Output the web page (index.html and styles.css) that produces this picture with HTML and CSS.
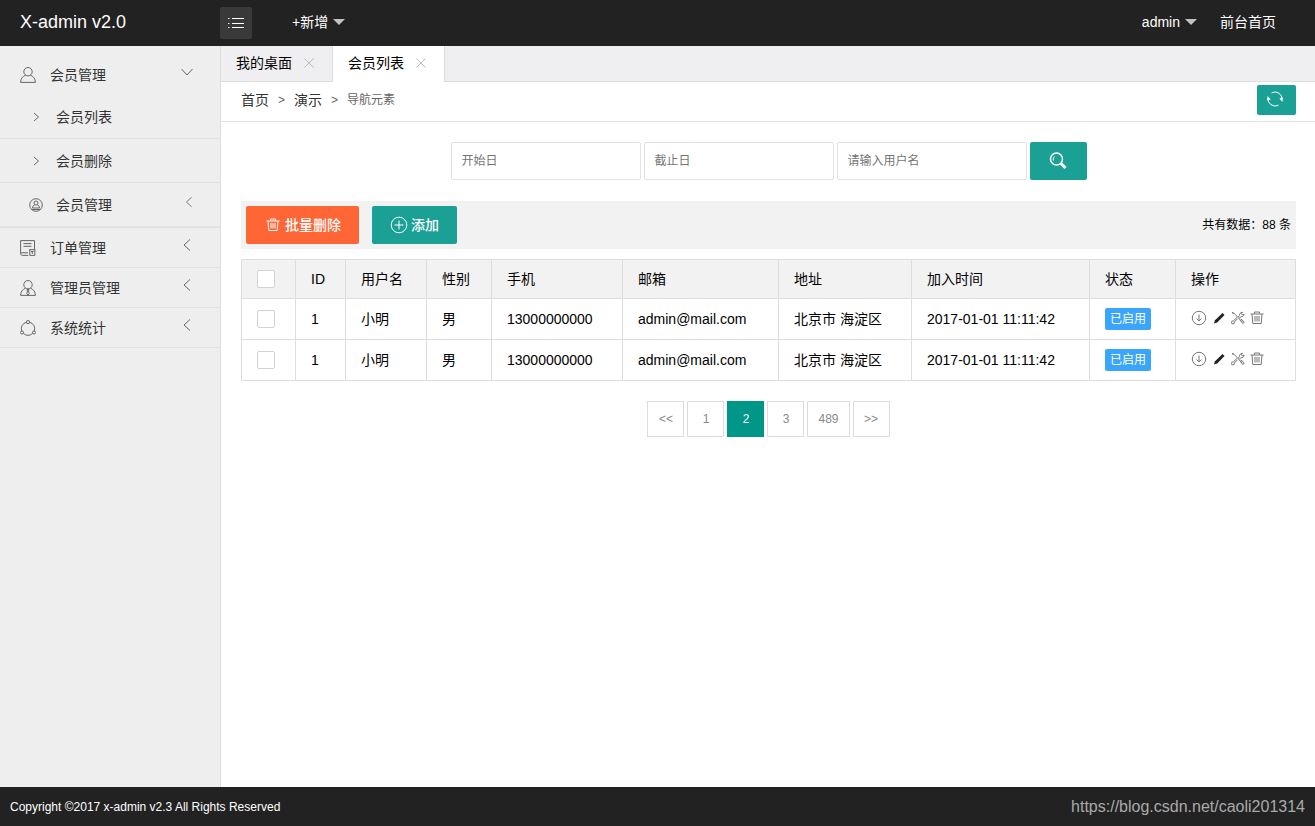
FILE: index.html
```html
<!DOCTYPE html>
<html lang="zh-CN">
<head>
<meta charset="utf-8">
<meta name="viewport" content="width=device-width, initial-scale=1">
<title>X-admin v2.0</title>
<link rel="stylesheet" href="styles.css">
</head>
<body>
<svg class="sprite" aria-hidden="true">
  <symbol id="user" viewBox="0 0 16 16"><circle cx="8" cy="4.700" r="4.200"/><path d="M5.500 8.200C2.500 9.500.8 11.500.6 15.400h14.800c-.2-3.900-1.900-5.900-4.900-7.200"/></symbol>
  <symbol id="admin" viewBox="0 0 16 16"><circle cx="8" cy="4.700" r="4.200"/><path d="M5.500 8.200C2.500 9.500.8 11.500.6 15.400h14.800c-.2-3.900-1.900-5.900-4.900-7.200M7 9.500h2l-.5 1.500.7 2.500L8 15.200l-1.200-1.700.7-2.500z"/></symbol>
  <symbol id="order" viewBox="0 0 16 16"><path d="M14.500 9V.6H.6v12.500c0 1.500.5 2.300 1.900 2.300h5.700M3.500 3.600h8M3.500 6.300h8M1 12.800h7M9 9.700h6.500M9.800 9.700v5.700h5v-5.700M11 11.500h2.600M12.300 11.500v2.300"/></symbol>
  <symbol id="stats" viewBox="0 0 16 16"><circle cx="8" cy="2.100" r="1.600"/><circle cx="2" cy="12.500" r="1.500"/><circle cx="14" cy="12.500" r="1.500"/><path d="M6.400 2.300A6.400 6.400 0 0 0 1.800 11M9.600 2.300A6.400 6.400 0 0 1 14.200 11M3.300 13.300a6.400 6.400 0 0 0 9.400 0"/></symbol>
  <symbol id="member" viewBox="0 0 14 14"><circle cx="7" cy="7" r="6.300"/><circle cx="7" cy="5" r="2"/><path d="M5.800 6.700C4.300 7.400 3.600 8.300 3.500 10h7c-.1-1.700-.8-2.600-2.300-3.300M2.500 11.500h9"/></symbol>
  <symbol id="right" viewBox="0 0 14 14"><path d="M5 3l4.500 4L5 11"/></symbol>
  <symbol id="left" viewBox="0 0 14 14"><path d="M10 1.500L4 7l6 5.500"/></symbol>
  <symbol id="down" viewBox="0 0 14 14"><path d="M1.500 4L7 10l5.500-6"/></symbol>
  <symbol id="close" viewBox="0 0 14 14"><path d="M2.500 2.500l9 9M11.500 2.500l-9 9"/></symbol>
  <symbol id="list" viewBox="0 0 18 18"><path d="M1 4.500h1.500M5 4.500h12M1 9.500h1.500M5 9.500h12M1 13.500h1.500M5 13.500h12"/></symbol>
  <symbol id="refresh" viewBox="0 0 16 16"><path d="M4.500 1.900A7 7 0 0 1 14.900 9M11.500 14.100A7 7 0 0 1 1.100 7"/><path class="solid" d="M0 9.500L.6 5l3 3.500zM16 6.500l-.6 4.500-3-3.500z"/></symbol>
  <symbol id="search" viewBox="0 0 18 18"><circle class="ring" cx="7.500" cy="7" r="6"/><path d="M4.500 8.500a3.500 3.500 0 0 1 1-4"/><path class="handle" d="M12 11.500l4.500 4.500"/></symbol>
  <symbol id="trash" viewBox="0 0 14 14"><path d="M.5 3h13M4.500 2.800V1h5v1.800M2 3l.8 9.500h8.400L12 3M5 5v5.500M7 5v5.500M9 5v5.500"/></symbol>
  <symbol id="plus" viewBox="0 0 18 18"><circle cx="9" cy="9" r="7.800"/><path d="M4.500 9h9M9 4.500v9"/></symbol>
  <symbol id="download" viewBox="0 0 16 16"><circle cx="8" cy="8" r="6.700"/><path d="M8 4.500v6.500M5.500 8.500L8 11l2.500-2.500"/></symbol>
  <symbol id="pencil" viewBox="0 0 14 14"><path class="solid" d="M2 12.500l1-3.300L10.500 2l2 2-7.300 7.500z"/></symbol>
  <symbol id="tools" viewBox="0 0 14 14"><path d="M1 1.500l2 .7 8.500 9M1.500 1l.7 2M8.500 8.500l3.300 4 1.500-1.500-3.500-3.200M6.500 7.800L3.300 11a1.500 1.500 0 1 1-1-1L6 6.500M7 6.200l1.500-1.500C8.200 3 9.500 1.200 11.500 1.300L10.300 2.700l1 1.200L13 3c.1 2-1.500 3-3.300 2.800L8.200 7.300"/></symbol>
</svg>

<header class="topbar">
  <a class="logo" href="#">X-admin v2.0</a>
  <button class="toggle" type="button" aria-label="切换菜单"><svg class="icon icon-lg"><use href="#list"/></svg></button>
  <button class="top-link" type="button">+新增<span class="caret"></span></button>
  <nav class="top-right">
    <button class="top-link" type="button">admin<span class="caret"></span></button>
    <a class="top-link" href="#">前台首页</a>
  </nav>
</header>

<div class="shell">
  <nav class="sidebar">
    <button class="item open" type="button"><svg class="icon icon-md"><use href="#user"/></svg><span class="label">会员管理</span><svg class="icon arrow"><use href="#down"/></svg></button>
    <div class="submenu">
      <a class="subitem" href="#"><svg class="icon"><use href="#right"/></svg><span class="label">会员列表</span></a>
      <a class="subitem" href="#"><svg class="icon"><use href="#right"/></svg><span class="label">会员删除</span></a>
      <button class="subitem" type="button"><svg class="icon"><use href="#member"/></svg><span class="label">会员管理</span><svg class="icon icon-sm arrow"><use href="#left"/></svg></button>
    </div>
    <button class="item" type="button"><svg class="icon icon-md"><use href="#order"/></svg><span class="label">订单管理</span><svg class="icon arrow"><use href="#left"/></svg></button>
    <button class="item" type="button"><svg class="icon icon-md"><use href="#admin"/></svg><span class="label">管理员管理</span><svg class="icon arrow"><use href="#left"/></svg></button>
    <button class="item" type="button"><svg class="icon icon-md"><use href="#stats"/></svg><span class="label">系统统计</span><svg class="icon arrow"><use href="#left"/></svg></button>
  </nav>

  <main class="main">
    <div class="tabs">
      <div class="tab"><a href="#">我的桌面</a><button class="tab-close" type="button" aria-label="关闭我的桌面"><svg class="icon"><use href="#close"/></svg></button></div>
      <div class="tab active"><a href="#">会员列表</a><button class="tab-close" type="button" aria-label="关闭会员列表"><svg class="icon"><use href="#close"/></svg></button></div>
    </div>

    <div class="crumbs">
      <a href="#">首页</a><span class="sep">&gt;</span><a href="#">演示</a><span class="sep">&gt;</span><span class="current">导航元素</span>
      <button class="btn refresh" type="button" aria-label="刷新"><svg class="icon icon-md"><use href="#refresh"/></svg></button>
    </div>

    <div class="content">
      <form class="search">
        <input class="field" type="text" placeholder="开始日" aria-label="开始日">
        <input class="field" type="text" placeholder="截止日" aria-label="截止日">
        <input class="field" type="text" placeholder="请输入用户名" aria-label="请输入用户名">
        <button class="btn submit" type="button" aria-label="搜索"><svg class="icon icon-lg"><use href="#search"/></svg></button>
      </form>

      <div class="toolbar">
        <button class="btn danger" type="button"><svg class="icon"><use href="#trash"/></svg>批量删除</button>
        <button class="btn add" type="button"><svg class="icon icon-lg"><use href="#plus"/></svg>添加</button>
        <span class="total">共有数据：88 条</span>
      </div>

      <table class="grid">
        <colgroup><col class="c-check"><col class="c-id"><col class="c-name"><col class="c-sex"><col class="c-phone"><col class="c-mail"><col class="c-addr"><col class="c-time"><col class="c-state"><col class="c-ops"></colgroup>
        <thead>
          <tr><th><input class="check" type="checkbox" aria-label="全选"></th><th>ID</th><th>用户名</th><th>性别</th><th>手机</th><th>邮箱</th><th>地址</th><th>加入时间</th><th>状态</th><th>操作</th></tr>
        </thead>
        <tbody>
          <tr>
            <td><input class="check" type="checkbox" aria-label="选择第一行"></td><td>1</td><td>小明</td><td>男</td><td>13000000000</td><td>admin@mail.com</td><td>北京市 海淀区</td><td>2017-01-01 11:11:42</td><td><span class="badge">已启用</span></td>
            <td><div class="ops"><button type="button" aria-label="下载"><svg class="icon icon-md"><use href="#download"/></svg></button><button class="dark" type="button" aria-label="编辑"><svg class="icon"><use href="#pencil"/></svg></button><button type="button" aria-label="设置"><svg class="icon"><use href="#tools"/></svg></button><button type="button" aria-label="删除"><svg class="icon"><use href="#trash"/></svg></button></div></td>
          </tr>
          <tr>
            <td><input class="check" type="checkbox" aria-label="选择第二行"></td><td>1</td><td>小明</td><td>男</td><td>13000000000</td><td>admin@mail.com</td><td>北京市 海淀区</td><td>2017-01-01 11:11:42</td><td><span class="badge">已启用</span></td>
            <td><div class="ops"><button type="button" aria-label="下载"><svg class="icon icon-md"><use href="#download"/></svg></button><button class="dark" type="button" aria-label="编辑"><svg class="icon"><use href="#pencil"/></svg></button><button type="button" aria-label="设置"><svg class="icon"><use href="#tools"/></svg></button><button type="button" aria-label="删除"><svg class="icon"><use href="#trash"/></svg></button></div></td>
          </tr>
        </tbody>
      </table>

      <nav class="pages" aria-label="分页">
        <a href="#">&lt;&lt;</a><a href="#">1</a><a class="active" href="#">2</a><a href="#">3</a><a href="#">489</a><a href="#">&gt;&gt;</a>
      </nav>
    </div>
  </main>
</div>

<footer class="footer">
  <span>Copyright ©2017 x-admin v2.3 All Rights Reserved</span>
  <span class="source">https://blog.csdn.net/caoli201314</span>
</footer>
</body>
</html>
```
FILE: styles.css
```css
* { box-sizing: border-box; }

body {
  margin: 0;
  min-height: 100vh;
  display: flex;
  flex-direction: column;
  background: #fff;
  color: #000;
  font: 14px/20px "Liberation Sans", "Noto Sans CJK SC", sans-serif;
}

a { color: inherit; text-decoration: none; }
button, input { font: inherit; color: inherit; }
button { padding: 0; border: 0; background: none; cursor: pointer; }

.sprite { position: absolute; width: 0; height: 0; }
.icon { width: 14px; height: 14px; flex: none; fill: none; stroke: currentColor; display: block; }
.icon-sm { width: 12px; height: 12px; }
.icon-md { width: 16px; height: 16px; }
.icon-lg { width: 18px; height: 18px; }
.solid { fill: currentColor; stroke: none; }
.ring { stroke-width: 1.5; }
.handle { stroke-width: 3; }

/* Top bar */
.topbar {
  height: 46px;
  display: flex;
  align-items: center;
  background: #222;
  color: #fff;
  padding-right: 39px;
}
.logo { width: 220px; padding: 0 0 2px 20px; font-size: 18px; }
.toggle {
  width: 32px;
  height: 32px;
  margin-right: 40px;
  display: grid;
  place-items: center;
  background: #393939;
  border-radius: 2px;
}
.top-link { display: flex; align-items: center; gap: 5px; padding-bottom: 2px; }
.caret { border: 6px solid transparent; border-top-color: #c2c2c2; border-bottom: 0; }
.top-right { margin-left: auto; display: flex; gap: 23px; }

/* Side menu */
.shell { flex: 1; display: flex; }
.sidebar {
  width: 221px;
  flex: none;
  padding-top: 9px;
  background: #eee;
  border-right: 1px solid #ddd;
  color: #333;
}
.item, .subitem {
  width: 100%;
  display: flex;
  align-items: center;
  text-align: left;
  border-bottom: 1px solid #e2e2e2;
}
.item { height: 40px; padding: 0 26px 0 20px; gap: 14px; }
.item.open { border-bottom: 0; }
.submenu { border-bottom: 1px solid #e2e2e2; }
.subitem { height: 44px; padding: 0 25px 0 29px; gap: 13px; }
.label { flex: 1; }
.sidebar .icon { color: #666; }
.sidebar .arrow { margin-bottom: 6px; }

/* Tabs */
.main { flex: 1; min-width: 0; }
.tabs { height: 36px; display: flex; background: #efeef0; border-bottom: 1px solid #ddd; }
.tab {
  height: 36px;
  display: flex;
  align-items: center;
  gap: 10px;
  padding: 0 16px 2px 15px;
  border-right: 1px solid #ddd;
}
.tab.active { background: #fff; }
.tab-close { color: #bbb; }

/* Breadcrumb */
.crumbs {
  height: 40px;
  display: flex;
  align-items: center;
  gap: 9px;
  padding: 0 19px 3px 20px;
  border-bottom: 1px solid #e5e5e5;
  color: #333;
}
.sep, .current { font-size: 12px; color: #666; }

.btn {
  height: 38px;
  display: flex;
  align-items: center;
  justify-content: center;
  background: #1aa094;
  border-radius: 2px;
  color: #fff;
}
.refresh { width: 39px; height: 30px; margin-left: auto; padding: 0 4px 2px 0; }

/* Search */
.content { padding: 20px 19px 20px 20px; }
.search { display: flex; justify-content: center; gap: 3px; }
.field {
  width: 190px;
  height: 38px;
  padding: 0 10px;
  border: 1px solid #e2e2e2;
  border-radius: 2px;
  background: #fff;
  font-size: 12px;
}
.field::placeholder { color: #757575; opacity: 1; }
.submit { width: 57px; }

.toolbar {
  margin-top: 21px;
  padding: 5px;
  display: flex;
  align-items: center;
  gap: 13px;
  background: #f2f2f2;
}
.toolbar .btn { padding: 0 18px; gap: 3px; font-weight: 500; }
.toolbar .danger { padding: 0 18px 0 20px; gap: 5px; background: #ff6635; }
.total { margin-left: auto; font-size: 12px; }

/* Data table */
.grid { width: 100%; margin-top: 10px; border-collapse: collapse; }
.grid th, .grid td {
  height: 41px;
  padding: 0 15px;
  border: 1px solid #ddd;
  text-align: left;
  font-weight: 400;
  white-space: nowrap;
}
.grid th { height: 39px; background: #f2f2f2; }
.c-check { width: 54px; }
.c-id { width: 50px; }
.c-name { width: 81px; }
.c-sex { width: 65px; }
.c-phone { width: 131px; }
.c-mail { width: 156px; }
.c-addr { width: 133px; }
.c-time { width: 178px; }
.c-state { width: 86px; }
.c-ops { width: 120px; }
.check {
  appearance: none;
  display: block;
  width: 18px;
  height: 18px;
  margin: 0;
  border: 1px solid #d2d2d2;
  border-radius: 2px;
  background: #fff;
}
.check:checked { background: #1aa094; }
.badge {
  display: inline-block;
  padding: 1px 5px;
  border-radius: 2px;
  background: #3ba5fc;
  color: #fff;
  font-size: 12px;
}
.ops { display: flex; align-items: center; gap: 5px; padding-bottom: 2px; color: #777; }
.ops .dark { color: #222; }

/* Pagination */
.pages { margin-top: 20px; display: flex; justify-content: center; gap: 3px; }
.pages a {
  min-width: 37px;
  height: 36px;
  padding: 0 10px;
  display: grid;
  place-items: center;
  border: 1px solid #ddd;
  color: #888;
  font-size: 12px;
}
.pages .active { background: #009688; border-color: #009688; color: #fff; }

.footer {
  height: 39px;
  padding: 0 10px;
  display: flex;
  align-items: center;
  justify-content: space-between;
  background: #222;
  color: #fff;
  font-size: 12px;
}
.source { font-size: 16px; color: #aaa; }
```
